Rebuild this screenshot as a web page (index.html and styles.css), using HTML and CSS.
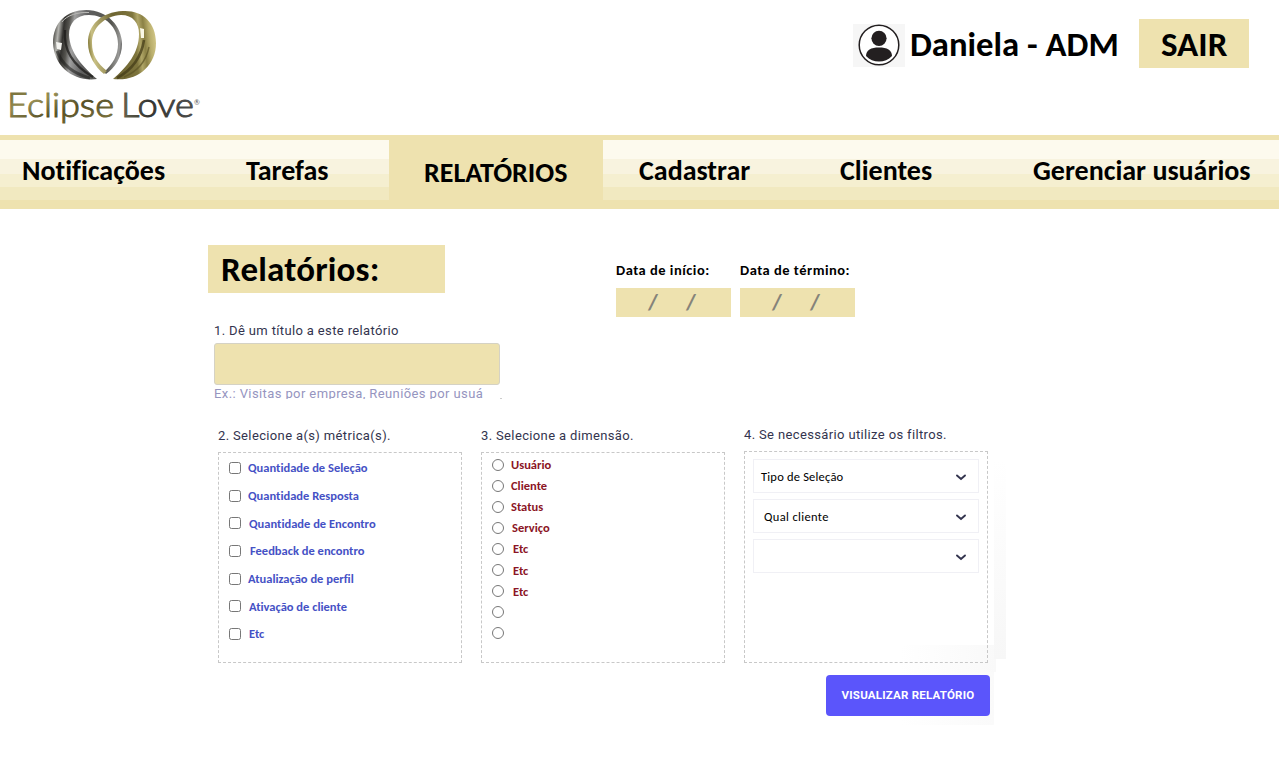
FILE: index.html
```html
<!DOCTYPE html>
<html lang="pt-BR">
<head>
<meta charset="utf-8">
<title>Eclipse Love - Relatórios</title>
<link rel="stylesheet" href="styles.css">
</head>
<body>
<header class="header">
  <svg class="logo" width="215" height="130" viewBox="0 0 215 130">
    <defs>
      <linearGradient id="silver" gradientUnits="userSpaceOnUse" x1="53" y1="40" x2="123" y2="48">
        <stop offset="0" stop-color="#55544f"/><stop offset=".06" stop-color="#b5b5b0"/><stop offset=".13" stop-color="#33322f"/><stop offset=".2" stop-color="#55544f"/><stop offset=".27" stop-color="#a0a0a0"/><stop offset=".45" stop-color="#5f5f5f"/><stop offset=".8" stop-color="#55554f"/><stop offset=".95" stop-color="#9a9a98"/><stop offset="1" stop-color="#444"/>
      </linearGradient>
      <linearGradient id="gold" gradientUnits="userSpaceOnUse" x1="88" y1="45" x2="157" y2="38">
        <stop offset="0" stop-color="#857b3c"/><stop offset=".07" stop-color="#c9c083"/><stop offset=".4" stop-color="#6d6431"/><stop offset=".68" stop-color="#7e753d"/><stop offset=".75" stop-color="#b0a667"/><stop offset=".82" stop-color="#8b8145"/><stop offset=".9" stop-color="#b9ae6c"/><stop offset="1" stop-color="#d6cb8c"/>
      </linearGradient>
      <linearGradient id="goldText" x1="0" y1="0" x2="1" y2="1">
        <stop offset="0" stop-color="#6b6430"/><stop offset=".35" stop-color="#938a50"/><stop offset=".6" stop-color="#554e25"/><stop offset="1" stop-color="#857c42"/>
      </linearGradient>
      <linearGradient id="darkText" x1="0" y1="0" x2="1" y2="0">
        <stop offset="0" stop-color="#66634c"/><stop offset=".4" stop-color="#333331"/><stop offset="1" stop-color="#4c4c4a"/>
      </linearGradient>
    </defs>
    <path fill="url(#silver)" fill-rule="evenodd" d="M97 79C74 82 54 67 53 43C53 22 67 10 86 10C108 10 122 27 122 44C122 57 115 68 106 74L104 72C113 64 118 55 118 44C118 27 105 15 89 15C76 15 69 23 69 35C70 53 83 67 97 79Z"/>
    <path d="M65 30C63 51 74 66 93 77" fill="none" stroke="#1c1b19" stroke-width="2.200" opacity=".75"/>
    <path d="M57 51C62 65 75 74 90 78" fill="none" stroke="#1c1b19" stroke-width="3" opacity=".55"/>
    <path d="M56 42L62 43L61 50L57 49Z" fill="#f3f3ef"/>
    <path d="M62 22C67 15 78 12 89 12.500" fill="none" stroke="#b9b9b6" stroke-width="1"/>
    <path fill="url(#gold)" fill-rule="evenodd" d="M113 79C137 82 156 66 156 43C156 22 142 10 123 11C101 12 88 25 88 43C88 55 95 67 104 74L107 71C97 63 92 55 92 43C92 27 105 16 121 15C133 15 139 23 139 34C139 53 127 67 113 79Z"/>
    <path d="M144 40C141 59 130 71 117 78" fill="none" stroke="#443c18" stroke-width="2.600" opacity=".75"/>
    <path d="M149 47C146 62 136 72 124 77" fill="none" stroke="#5d5425" stroke-width="1.400" opacity=".7"/>
    <path d="M140 28L144 29L144 38L141 38Z" fill="#fbf9e6"/>
    <text class="brand" x="7" y="117" textLength="107" lengthAdjust="spacingAndGlyphs" fill="url(#goldText)" stroke="url(#goldText)">Eclipse</text>
    <text class="brand" x="121" y="117" textLength="73" lengthAdjust="spacingAndGlyphs" fill="url(#darkText)" stroke="url(#darkText)">Love</text>
    <text class="registered" x="194" y="105">®</text>
  </svg>
  <div class="account">
    <span class="avatar"><svg width="42" height="42" viewBox="0 0 42 42"><circle cx="21" cy="21" r="19.8" fill="#fff" stroke="#231f20" stroke-width="1.500"/><circle cx="21" cy="14.300" r="7.600" fill="#231f20"/><path fill="#231f20" d="M8 32C8 26 13 23.500 21 23.500S34 26 34 32C30.500 35.700 26 37.600 21 37.600S11.500 35.700 8 32Z"/></svg></span>
    <span class="user">Daniela - ADM</span>
    <a class="logout">SAIR</a>
  </div>
</header>
<nav class="nav">
  <a class="tab t1">Notificações</a>
  <a class="tab t2">Tarefas</a>
  <a class="tab active">RELATÓRIOS</a>
  <a class="tab t4">Cadastrar</a>
  <a class="tab t5">Clientes</a>
  <a class="tab t6">Gerenciar usuários</a>
</nav>
<main class="main">
  <div class="top">
    <div class="intro">
      <h1 class="title">Relatórios:</h1>
      <div class="name-field">
        <label class="label">1. Dê um título a este relatório</label>
        <div class="name-input"></div>
        <div class="hint"><span>Ex.: Visitas por empresa, Reuniões por usuá</span><i></i></div>
      </div>
    </div>
    <div class="dates">
      <div class="date"><span class="date-label">Data de início:</span><div class="date-input"><span>/</span><span>/</span></div></div>
      <div class="date"><span class="date-label">Data de término:</span><div class="date-input"><span>/</span><span>/</span></div></div>
    </div>
  </div>
  <div class="columns">
    <section class="col">
      <h2 class="label">2. Selecione a(s) métrica(s).</h2>
      <ul class="panel metrics">
        <li><i class="check"></i><span>Quantidade de Seleção</span></li>
        <li><i class="check"></i><span>Quantidade Resposta</span></li>
        <li class="shift-1"><i class="check"></i><span>Quantidade de Encontro</span></li>
        <li class="shift-2"><i class="check"></i><span>Feedback de encontro</span></li>
        <li><i class="check"></i><span>Atualização de perfil</span></li>
        <li class="shift-1"><i class="check"></i><span>Ativação de cliente</span></li>
        <li class="shift-1"><i class="check"></i><span>Etc</span></li>
      </ul>
    </section>
    <section class="col">
      <h2 class="label">3. Selecione a dimensão.</h2>
      <ul class="panel dimensions">
        <li><i class="radio"></i><span>Usuário</span></li>
        <li><i class="radio"></i><span>Cliente</span></li>
        <li><i class="radio"></i><span>Status</span></li>
        <li class="shift-1"><i class="radio"></i><span>Serviço</span></li>
        <li class="shift-2"><i class="radio"></i><span>Etc</span></li>
        <li class="shift-2"><i class="radio"></i><span>Etc</span></li>
        <li class="shift-2"><i class="radio"></i><span>Etc</span></li>
        <li><i class="radio"></i></li>
        <li><i class="radio"></i></li>
      </ul>
    </section>
    <section class="col filters-col">
      <h2 class="label">4. Se necessário utilize os filtros.</h2>
      <div class="panel filters">
        <div class="select"><span>Tipo de Seleção</span><svg width="12" height="8" viewBox="0 0 12 8"><path d="M2 2.500L6 6L10 2.500" fill="none" stroke="#33344e" stroke-width="1.900" stroke-linecap="round"/></svg></div>
        <div class="select client"><span>Qual cliente</span><svg width="12" height="8" viewBox="0 0 12 8"><path d="M2 2.500L6 6L10 2.500" fill="none" stroke="#33344e" stroke-width="1.900" stroke-linecap="round"/></svg></div>
        <div class="select"><span></span><svg width="12" height="8" viewBox="0 0 12 8"><path d="M2 2.500L6 6L10 2.500" fill="none" stroke="#33344e" stroke-width="1.900" stroke-linecap="round"/></svg></div>
      </div>
    </section>
  </div>
  <button class="submit">VISUALIZAR RELATÓRIO</button>
</main>
</body>
</html>
```
FILE: styles.css
```css
* { box-sizing: border-box; margin: 0; padding: 0; }
body { width: 1280px; height: 759px; overflow: hidden; background: #fff; color: #000; font-family: Carlito, Calibri, Lato, sans-serif; font-variant-ligatures: none; }
ul { list-style: none; }
i { font-style: normal; }
span { white-space: nowrap; }

.header { display: flex; justify-content: space-between; height: 135px; }
.brand { font: 300 33px Lato, sans-serif; stroke-width: 1px; }
.registered { font: 7px Lato, sans-serif; fill: #555; }
.account { display: flex; align-items: flex-start; padding: 19px 31px 0 0; }
.avatar { display: flex; width: 52px; height: 43px; margin-top: 5px; padding-left: 5px; background: #f6f6f6; }
.user { width: 234px; padding-left: 5px; font-size: 34.700px; font-weight: 700; line-height: 50px; }
.logout { width: 110px; height: 49px; padding-left: 22px; background: #eee2af; font-size: 35px; font-weight: 700; line-height: 51px; }

.nav { display: flex; width: 1279px; height: 74px; border-top: 5px solid #eee2af; background: linear-gradient(#fdfaee 0 19px, #f8f3df 19px 34px, #f5efd0 34px 47px, #f1e9c0 47px 60px, #eee2af 60px); font-size: 28px; font-weight: 700; line-height: 62px; white-space: nowrap; }
.t1 { width: 222px; padding-left: 22px; }
.t2 { width: 167px; padding-left: 24px; }
.active { width: 214px; padding-left: 35px; background: #eee2af; line-height: 66px; }
.t4 { width: 213px; padding-left: 36px; }
.t5 { width: 192px; padding-left: 24px; }
.t6 { padding-left: 25px; }

.main {
  width: 799px;
  margin-left: 208px;
  padding: 36px 17px 9px 0;
  background:
    linear-gradient(#fff, #f7f7f7) 786px 251px / 12px 199px no-repeat,
    linear-gradient(90deg, #fff, #f9f9f9) 692px 436px / 96px 27px no-repeat,
    linear-gradient(90deg, #fff, #fafafa) 692px 463px / 94px 53px no-repeat;
}
.top { display: flex; height: 182px; }
.intro { width: 408px; }
.title { width: 237px; height: 48px; padding-left: 13px; background: #eee2af; font-size: 35px; line-height: 49px; letter-spacing: .2px; }
.name-field { padding: 29px 0 0 6px; }
.label { display: block; height: 18px; color: #33344e; font: 400 13px/18px Roboto, sans-serif; letter-spacing: .36px; white-space: nowrap; }
.name-input { width: 286px; height: 42px; margin-top: 3px; border: 1px solid #d5d2c4; border-radius: 3px; background: #eee2af; }
.hint { display: flex; justify-content: space-between; align-items: flex-end; width: 288px; height: 14px; overflow: hidden; color: #9695bf; font: 13px/17px Roboto, sans-serif; letter-spacing: .4px; }
.hint span { align-self: flex-start; }
.hint i { width: 2px; height: 1px; background: #ccc; }
.dates { display: flex; gap: 9px; padding-top: 16px; }
.date { width: 115px; }
.date-label { display: block; height: 27px; font-size: 14.500px; font-weight: 700; line-height: 18px; letter-spacing: .5px; }
.date-input { display: flex; gap: 28px; height: 29px; padding-left: 32px; background: #eee2af; color: #85837a; font-size: 23px; font-weight: 700; line-height: 28px; }

.columns { display: flex; gap: 19px; padding-left: 10px; }
.col { width: 244px; }
.filters-col { margin-top: -1px; }
.panel { height: 211px; margin-top: 7px; border: 1px dashed #c8c8c8; }
.metrics { padding-top: 1px; color: #4551c5; font-size: 12.500px; font-weight: 700; }
.metrics li { display: flex; align-items: center; gap: 7px; height: 27.700px; padding-left: 10px; }
.check { width: 12px; height: 12px; border: 1px solid #777; border-radius: 2.500px; }
.dimensions { padding-top: 1px; color: #8b1525; font-size: 12.500px; font-weight: 700; }
.dimensions li { display: flex; align-items: center; gap: 7px; height: 21.100px; padding-left: 10px; }
.radio { width: 12px; height: 12px; border: 1px solid #777; border-radius: 50%; }
.panel .shift-1 { gap: 8px; }
.panel .shift-2 { gap: 9px; }
.filters { display: flex; flex-direction: column; gap: 6px; height: 212px; padding: 7px 8px; }
.select { display: flex; align-items: center; justify-content: space-between; height: 34px; padding: 1px 11px 0 7px; border: 1px solid #f0f0f5; font-size: 12.500px; letter-spacing: .2px; }
.client { padding-left: 10px; letter-spacing: .35px; }
.submit { display: block; width: 164px; height: 41px; margin: 12px 0 0 auto; border: 0; border-radius: 4px; background: #5b55fb; color: #fff; font: 700 11.500px/41px Roboto, sans-serif; letter-spacing: .22px; white-space: nowrap; }
```
